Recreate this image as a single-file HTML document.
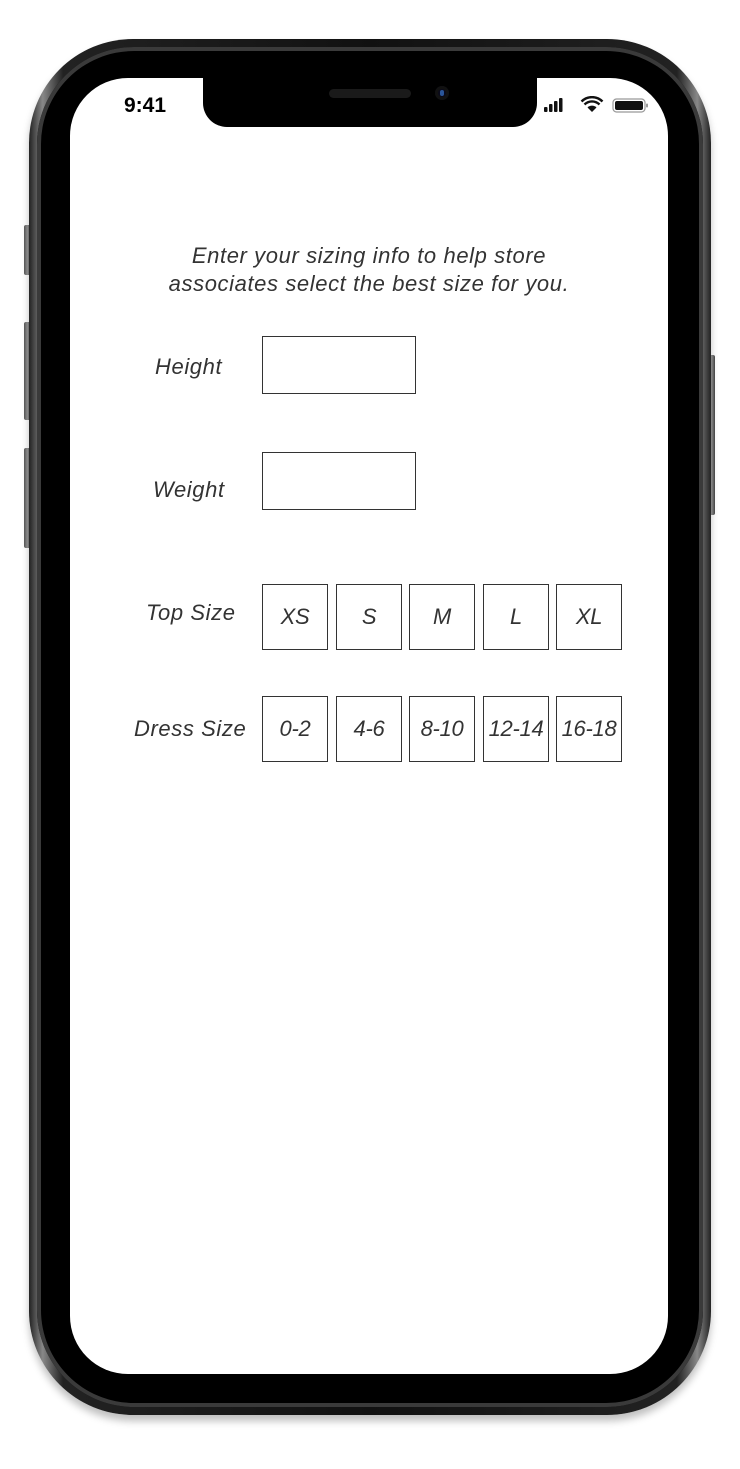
<!DOCTYPE html>
<html><head><style>
body{margin:0;width:740px;height:1469px;background:#fff;position:relative;overflow:hidden;font-family:"Liberation Sans",sans-serif}
.a{position:absolute}
.frame{left:29px;top:39px;width:682px;height:1376px;border-radius:104px;background:linear-gradient(90deg,#222,#888 2%,#222 5%,#111 50%,#222 95%,#888 98%,#222);box-shadow:0 6px 8px rgba(0,0,0,.25)}
.ring{left:37px;top:47px;width:666px;height:1360px;border-radius:97px;background:#000;box-shadow:inset 0 0 0 4px #3a3a3a}
.screen{left:70px;top:78px;width:598px;height:1296px;border-radius:58px;background:#fff;overflow:hidden}
.notch{left:203px;top:70px;width:334px;height:57px;background:#000;border-radius:0 0 24px 24px}
.btn{background:linear-gradient(90deg,#555,#999,#444);border-radius:2px}
.t{color:#333;font-style:italic;font-size:22px;letter-spacing:0.6px;white-space:nowrap}
.box{border:1.5px solid #333;box-sizing:border-box;display:flex;align-items:center;justify-content:center;font-style:italic;font-size:22px;color:#333;letter-spacing:-0.3px}
</style></head><body>
<div class="a btn" style="left:24px;top:225px;width:7px;height:50px"></div>
<div class="a btn" style="left:24px;top:322px;width:7px;height:98px"></div>
<div class="a btn" style="left:24px;top:448px;width:7px;height:100px"></div>
<div class="a btn" style="left:708px;top:355px;width:7px;height:160px"></div>
<div class="a frame"></div>
<div class="a ring"></div>
<div class="a screen"></div>
<div class="a notch"></div>
<div class="a" style="left:329px;top:89px;width:82px;height:9px;border-radius:5px;background:#1a1a1a"></div>
<div class="a" style="left:435px;top:86px;width:14px;height:14px;border-radius:50%;background:#0a0a1a;box-shadow:inset 0 0 0 3px #111"><div class="a" style="left:5px;top:4px;width:4px;height:6px;border-radius:2px;background:#2a5599"></div></div>
<div class="a" style="left:124px;top:94px;font-size:21px;font-weight:bold;color:#000">9:41</div>
<svg class="a" style="left:543px;top:96px" width="108" height="20" viewBox="0 0 108 20">
<rect x="1" y="11" width="3.5" height="5" rx="1" fill="#111"/><rect x="6" y="8" width="3.5" height="8" rx="1" fill="#111"/><rect x="11" y="5" width="3.5" height="11" rx="1" fill="#111"/><rect x="16" y="2" width="3.5" height="14" rx="1" fill="#111"/>
<path d="M49 16 L44.5 11.5 A6.4 6.4 0 0 1 53.5 11.5 Z" fill="#111"/>
<path d="M41.5 8.5 A10.6 10.6 0 0 1 56.5 8.5" stroke="#111" stroke-width="2.4" fill="none"/>
<path d="M38.5 5.5 A14.8 14.8 0 0 1 59.5 5.5" stroke="#111" stroke-width="2.4" fill="none"/>
<rect x="70" y="3" width="32" height="13" rx="3.5" fill="none" stroke="#999" stroke-width="1.2"/><rect x="72" y="5" width="28" height="9" rx="2" fill="#111"/><rect x="103" y="7.5" width="2" height="4" rx="1" fill="#999"/>
</svg>
<div class="a t" style="left:70px;width:598px;top:242px;text-align:center;line-height:28px">Enter your sizing info to help store<br>associates select the best size for you.</div>
<div class="a t" style="left:155px;top:354px">Height</div>
<div class="a box" style="left:262px;top:336px;width:154px;height:58px"></div>
<div class="a t" style="left:153px;top:477px">Weight</div>
<div class="a box" style="left:262px;top:452px;width:154px;height:58px"></div>
<div class="a t" style="left:146px;top:600px">Top Size</div>
<div class="a box" style="left:262px;top:584px;width:66px;height:66px">XS</div>
<div class="a box" style="left:336px;top:584px;width:66px;height:66px">S</div>
<div class="a box" style="left:409px;top:584px;width:66px;height:66px">M</div>
<div class="a box" style="left:483px;top:584px;width:66px;height:66px">L</div>
<div class="a box" style="left:556px;top:584px;width:66px;height:66px">XL</div>
<div class="a t" style="left:134px;top:716px">Dress Size</div>
<div class="a box" style="left:262px;top:696px;width:66px;height:66px">0-2</div>
<div class="a box" style="left:336px;top:696px;width:66px;height:66px">4-6</div>
<div class="a box" style="left:409px;top:696px;width:66px;height:66px">8-10</div>
<div class="a box" style="left:483px;top:696px;width:66px;height:66px">12-14</div>
<div class="a box" style="left:556px;top:696px;width:66px;height:66px">16-18</div>
</body></html>
